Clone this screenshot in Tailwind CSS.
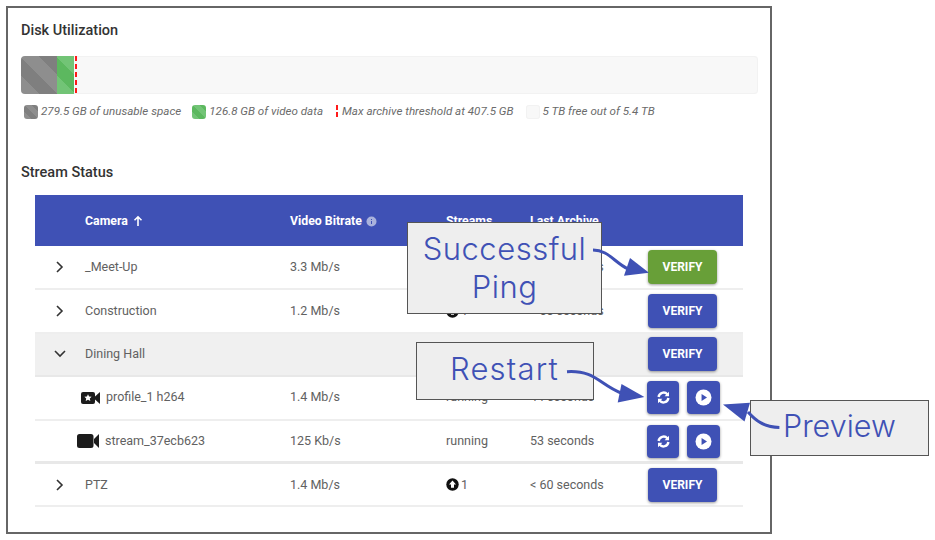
<!DOCTYPE html>
<html lang="en">
<head>
  <meta charset="UTF-8">
  <title>Stream Status</title>
  <script src="https://cdn.jsdelivr.net/npm/@tailwindcss/browser@4"></script>
</head>
<body class="relative w-[935px] h-[540px] overflow-hidden bg-white font-['Roboto',sans-serif] text-[12.5px] text-[#616161]">
  <!-- Panel -->
  <div class="ml-[6px] mt-[6px] w-[766px] h-[528px] border-2 border-[#666] pl-[13px] pt-[13px]">
    <h2 class="text-[14.5px] leading-5 font-medium text-[#333]">Disk Utilization</h2>

    <!-- Disk bar -->
    <div class="mt-[15px] w-[737px] h-[38px] flex rounded-[4px] bg-[#f8f8f8] shadow-[inset_0_0_0_1px_#f2f2f2] overflow-hidden">
      <div class="w-[36px] bg-[repeating-linear-gradient(45deg,#8e8e8e_0,#8e8e8e_13px,#7f7f7f_13px,#7f7f7f_26px)]"></div>
      <div class="w-[17px] bg-[repeating-linear-gradient(45deg,#72c476_0,#72c476_13px,#5cb85f_13px,#5cb85f_26px)]"></div>
      <div class="ml-[1px] w-[2px] bg-[repeating-linear-gradient(180deg,#ff1a1a_0,#ff1a1a_5px,transparent_5px,transparent_8px)]"></div>
    </div>

    <!-- Legend -->
    <div class="mt-[9px] flex items-center h-[17px] pl-[3px] text-[11.6px] italic text-[#6b6b6b]">
      <span class="w-[14px] h-[14px] rounded-[3px] bg-[repeating-linear-gradient(45deg,#8e8e8e_0,#8e8e8e_5px,#7f7f7f_5px,#7f7f7f_10px)]"></span>
      <span class="ml-[3px]">279.5 GB of unusable space</span>
      <span class="ml-[11px] w-[14px] h-[14px] rounded-[3px] bg-[repeating-linear-gradient(45deg,#72c476_0,#72c476_5px,#5cb85f_5px,#5cb85f_10px)]"></span>
      <span class="ml-[3px]">126.8 GB of video data</span>
      <span class="ml-[13px] w-[2px] h-[14px] bg-[repeating-linear-gradient(180deg,#ff1a1a_0,#ff1a1a_5px,transparent_5px,transparent_7px)]"></span>
      <span class="ml-[4px]">Max archive threshold at 407.5 GB</span>
      <span class="ml-[12px] w-[14px] h-[14px] rounded-[3px] bg-[#f8f8f8] shadow-[inset_0_0_0_1px_#f2f2f2]"></span>
      <span class="ml-[3px]">5 TB free out of 5.4 TB</span>
    </div>

    <h2 class="mt-[43px] text-[14.5px] leading-5 font-medium text-[#333]">Stream Status</h2>

    <!-- Table -->
    <table class="mt-[12px] ml-[14px] w-[708px] table-fixed border-collapse">
      <colgroup>
        <col class="w-[50px]"><col class="w-[205px]"><col class="w-[156px]"><col class="w-[84px]"><col class="w-[113px]"><col>
      </colgroup>
      <thead class="bg-[#3f51b5] text-white font-bold text-[12.3px]">
        <tr class="h-[51px]">
          <th></th>
          <th class="text-left font-bold pt-[1px]"><span class="inline-flex items-center gap-[4px]">Camera
            <svg class="w-[12px] h-[12px]" viewBox="0 0 12 12" fill="none" stroke="white" stroke-width="1.6"><path d="M6 11V2M2.500 5.200 6 1.800l3.500 3.400"/></svg></span></th>
          <th class="text-left font-bold pt-[1px]"><span class="inline-flex items-center gap-[4px]">Video Bitrate
            <svg class="w-[11px] h-[11px]" viewBox="0 0 11 11"><circle cx="5.500" cy="5.500" r="5" fill="#aab2dc"/><path d="M5.500 5v3M5.500 3v1" stroke="#3f51b5" stroke-width="1"/></svg></span></th>
          <th class="text-left font-bold pt-[1px]">Streams</th>
          <th class="text-left font-bold pt-[1px]">Last Archive</th>
          <th></th>
        </tr>
      </thead>
      <tbody>
        <tr class="h-[43.4px] border-b-2 border-[#eeeeee]">
          <td class="pl-[20px]"><svg class="w-[10px] h-[14px]" viewBox="0 0 10 14" fill="none" stroke="#333" stroke-width="1.6"><path d="M2 2l5 5-5 5"/></svg></td>
          <td>_Meet-Up</td><td>3.3 Mb/s</td>
          <td><span class="flex items-center gap-[2px]"><svg class="w-[13px] h-[13px]" viewBox="0 0 13 13"><circle cx="6.500" cy="6.500" r="6.200" fill="#111"/><path d="M6.500 2.600 10 6.400H8v3.400H5V6.400H3z" fill="white"/></svg>1</span></td>
          <td>&lt; 60 seconds</td>
          <td class="pl-[5px]"><button class="w-[69px] h-[34px] rounded-[4px] bg-[#689f38] text-white font-bold text-[12px] shadow-[0_1px_3px_rgba(0,0,0,0.4)]">VERIFY</button></td>
        </tr>
        <tr class="h-[43.4px] border-b-2 border-[#eeeeee]">
          <td class="pl-[20px]"><svg class="w-[10px] h-[14px]" viewBox="0 0 10 14" fill="none" stroke="#333" stroke-width="1.6"><path d="M2 2l5 5-5 5"/></svg></td>
          <td>Construction</td><td>1.2 Mb/s</td>
          <td><span class="flex items-center gap-[2px]"><svg class="w-[13px] h-[13px]" viewBox="0 0 13 13"><circle cx="6.500" cy="6.500" r="6.200" fill="#111"/><path d="M6.500 2.600 10 6.400H8v3.400H5V6.400H3z" fill="white"/></svg>1</span></td>
          <td>&lt; 60 seconds</td>
          <td class="pl-[5px]"><button class="w-[69px] h-[34px] rounded-[4px] bg-[#3f51b5] text-white font-bold text-[12px] shadow-[0_1px_3px_rgba(0,0,0,0.4)]">VERIFY</button></td>
        </tr>
        <tr class="h-[43.4px] border-b-2 border-[#e8e8e8] bg-[#f0f0f0]">
          <td class="pl-[18px]"><svg class="w-[14px] h-[10px]" viewBox="0 0 14 10" fill="none" stroke="#333" stroke-width="1.6"><path d="M2 2l5 5 5-5"/></svg></td>
          <td>Dining Hall</td><td></td><td></td><td></td>
          <td class="pl-[5px]"><button class="w-[69px] h-[34px] rounded-[4px] bg-[#3f51b5] text-white font-bold text-[12px] shadow-[0_1px_3px_rgba(0,0,0,0.4)]">VERIFY</button></td>
        </tr>
        <tr class="h-[43.4px] border-b-2 border-[#eeeeee]">
          <td></td>
          <td><span class="flex items-center gap-[6px] -ml-[4px]">
            <svg class="w-[19px] h-[14px]" viewBox="0 0 19 14"><path d="M2 1h10a2 2 0 0 1 2 2v8a2 2 0 0 1-2 2H2a2 2 0 0 1-2-2V3a2 2 0 0 1 2-2z" fill="#1c1c1c"/><path d="M14 5.500 19 1v12l-5-4.500z" fill="#1c1c1c"/><path d="M7 3.200l1.100 2.300 2.500.3-1.800 1.700.5 2.500L7 8.800 4.700 10l.5-2.500-1.800-1.700 2.500-.3z" fill="white"/></svg>
            profile_1 h264</span></td>
          <td>1.4 Mb/s</td><td>running</td><td>44 seconds</td>
          <td>
            <span class="flex gap-[8px] ml-[4px]">
              <button class="flex items-center justify-center w-[32px] h-[33px] rounded-[4px] bg-[#3f51b5] shadow-[0_1px_3px_rgba(0,0,0,0.4)]">
                <svg class="w-[13px] h-[13px]" viewBox="0 0 13 13" fill="none" stroke="white" stroke-width="2.400"><path d="M1.600 6A5 5 0 0 1 10.400 3.400"/><path d="M11.400 7a5 5 0 0 1-8.800 2.600"/><path d="M12 .8v4.400H7.600z" fill="white" stroke="none"/><path d="M1 12.200V7.800h4.400z" fill="white" stroke="none"/></svg>
              </button>
              <button class="flex items-center justify-center w-[33px] h-[33px] rounded-[4px] bg-[#3f51b5] shadow-[0_1px_3px_rgba(0,0,0,0.4)]">
                <svg class="w-[17px] h-[17px]" viewBox="0 0 16 16"><circle cx="8" cy="8" r="7.500" fill="white"/><path d="M6.200 4.600 11.300 8l-5.100 3.400z" fill="#3f51b5"/></svg>
              </button>
            </span>
          </td>
        </tr>
        <tr class="h-[43.4px] border-b-[3px] border-[#e8e8e8]">
          <td></td>
          <td><span class="flex items-center gap-[6px] -ml-[8px]">
            <svg class="w-[22px] h-[16px]" viewBox="0 0 22 16"><path d="M2.500 1h11.500a2.500 2.500 0 0 1 2.500 2.500v9a2.500 2.500 0 0 1-2.500 2.500H2.500a2.500 2.500 0 0 1-2.500-2.500v-9A2.500 2.500 0 0 1 2.500 1z" fill="#1c1c1c"/><path d="M17 6 22 1v14l-5-5z" fill="#1c1c1c"/></svg>
            stream_37ecb623</span></td>
          <td>125 Kb/s</td><td>running</td><td>53 seconds</td>
          <td>
            <span class="flex gap-[8px] ml-[4px]">
              <button class="flex items-center justify-center w-[32px] h-[33px] rounded-[4px] bg-[#3f51b5] shadow-[0_1px_3px_rgba(0,0,0,0.4)]">
                <svg class="w-[13px] h-[13px]" viewBox="0 0 13 13" fill="none" stroke="white" stroke-width="2.400"><path d="M1.600 6A5 5 0 0 1 10.400 3.400"/><path d="M11.400 7a5 5 0 0 1-8.800 2.600"/><path d="M12 .8v4.400H7.600z" fill="white" stroke="none"/><path d="M1 12.200V7.800h4.400z" fill="white" stroke="none"/></svg>
              </button>
              <button class="flex items-center justify-center w-[33px] h-[33px] rounded-[4px] bg-[#3f51b5] shadow-[0_1px_3px_rgba(0,0,0,0.4)]">
                <svg class="w-[17px] h-[17px]" viewBox="0 0 16 16"><circle cx="8" cy="8" r="7.500" fill="white"/><path d="M6.200 4.600 11.300 8l-5.100 3.400z" fill="#3f51b5"/></svg>
              </button>
            </span>
          </td>
        </tr>
        <tr class="h-[43.4px] border-b-2 border-[#eeeeee]">
          <td class="pl-[20px]"><svg class="w-[10px] h-[14px]" viewBox="0 0 10 14" fill="none" stroke="#333" stroke-width="1.6"><path d="M2 2l5 5-5 5"/></svg></td>
          <td>PTZ</td><td>1.4 Mb/s</td>
          <td><span class="flex items-center gap-[2px]"><svg class="w-[13px] h-[13px]" viewBox="0 0 13 13"><circle cx="6.500" cy="6.500" r="6.200" fill="#111"/><path d="M6.500 2.600 10 6.400H8v3.400H5V6.400H3z" fill="white"/></svg>1</span></td>
          <td>&lt; 60 seconds</td>
          <td class="pl-[5px]"><button class="w-[69px] h-[34px] rounded-[4px] bg-[#3f51b5] text-white font-bold text-[12px] shadow-[0_1px_3px_rgba(0,0,0,0.4)]">VERIFY</button></td>
        </tr>
      </tbody>
    </table>
  </div>

  <!-- Callouts over the table -->
  <div class="absolute left-[407px] top-[222px] w-[195px] h-[92px] border border-[#555] bg-[#eeeeee] flex items-center justify-center text-center font-['Inter',sans-serif] font-light text-[31px] leading-[38px] tracking-[0.5px] text-[#3f51b5]">Successful<br>Ping</div>
  <div class="absolute left-[416px] top-[342px] w-[178px] h-[58px] border border-[#555] bg-[#eeeeee] pl-[33px] pb-[4px] flex items-center font-['Inter',sans-serif] font-light text-[31px] tracking-[1.2px] text-[#3f51b5]">Restart</div>
  <div class="absolute left-[750px] top-[400px] w-[179px] h-[56px] border border-[#555] bg-[#eeeeee] pl-[32px] pb-[4px] flex items-center font-['Inter',sans-serif] font-light text-[30.5px] text-[#3f51b5]">Preview</div>

  <!-- Arrows -->
  <svg class="absolute left-0 top-0 w-[935px] h-[540px] pointer-events-none" viewBox="0 0 935 540" fill="none" stroke="#3f51b5" stroke-width="3">
    <path d="M593 250C608 250 614 262 628 269"/>
    <path d="M649 272.700 624 275.700 630 258z" fill="#3f51b5" stroke="none"/>
    <path d="M567 371.700C595 370 600 385 621 393"/>
    <path d="M644.400 397 617.700 402.500 621.500 384z" fill="#3f51b5" stroke="none"/>
    <path d="M779.400 427.400C764 427 756 421 748 412"/>
    <path d="M723 404.500 750 402.800 744.500 421.600z" fill="#3f51b5" stroke="none"/>
  </svg>
</body>
</html>
